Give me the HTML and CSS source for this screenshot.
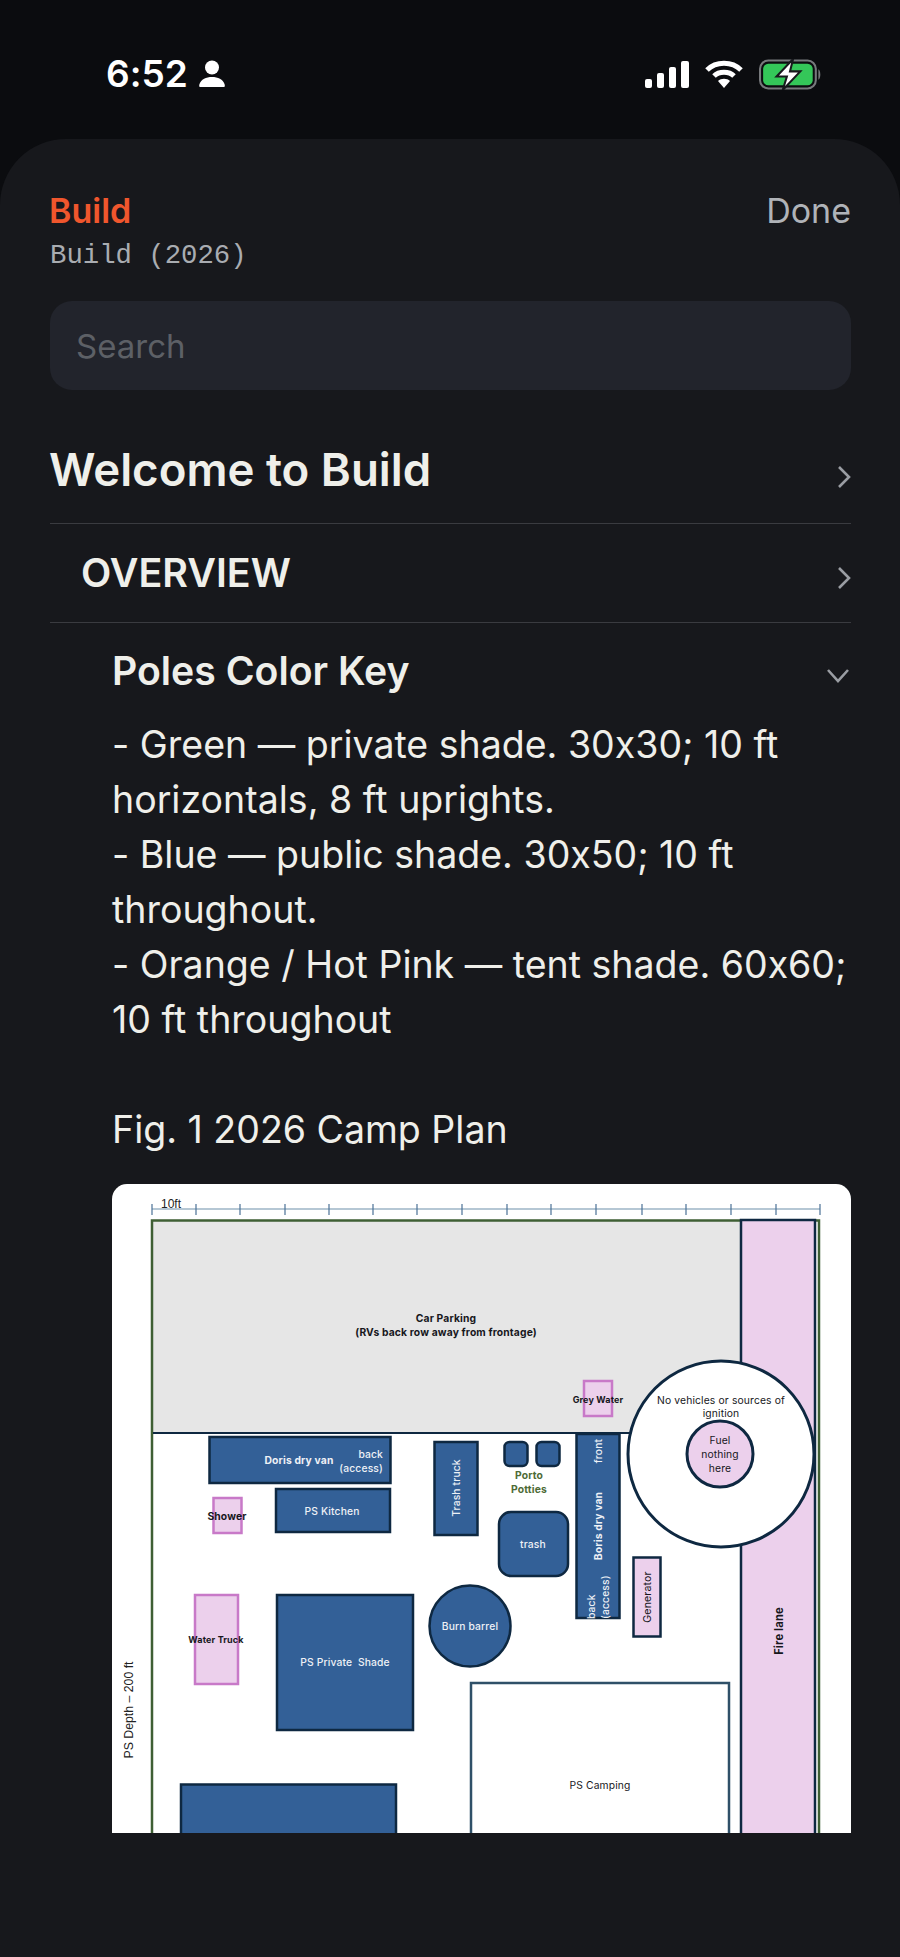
FILE: index.html
```html
<!DOCTYPE html>
<html lang="en">
<head>
    <meta charset="UTF-8">
    <meta name="viewport" content="width=device-width, initial-scale=1.0">
    <title>Build</title>
    <link rel="stylesheet" href="styles.css">
</head>
<body>
    <div class="status-bar">
        <div class="status-left">
            <span class="status-time">6:52</span>
            <svg class="icon-person" viewBox="0 0 26 28" fill="#fff">
                <circle cx="13" cy="7.5" r="7"></circle>
                <path d="M1 27C0 27 0 25.5 0.5 24C2 19.5 7 17 13 17C19 17 24 19.5 25.5 24C26 25.5 26 27 25 27Z"></path>
            </svg>
        </div>
        <div class="status-right">
            <svg class="icon-signal" viewBox="0 0 44 27" fill="#fff">
                <rect x="0" y="18" width="7" height="9" rx="2"></rect>
                <rect x="12" y="12" width="7" height="15" rx="2"></rect>
                <rect x="24" y="6" width="7" height="21" rx="2"></rect>
                <rect x="36" y="0" width="8" height="27" rx="2"></rect>
            </svg>
            <svg class="icon-wifi" viewBox="0 0 38 28" fill="none" stroke="#fff" stroke-width="5">
                <path d="M2 10C11 1 27 1 36 10"></path>
                <path d="M9 16C14 11 24 11 29 16"></path>
                <path d="M19 28L13 21C16 18 22 18 25 21Z" fill="#fff" stroke="none"></path>
            </svg>
            <svg class="icon-battery" viewBox="0 0 61 30">
                <rect x="1" y="1.5" width="54" height="27" rx="8" fill="none" stroke="#77797c" stroke-width="2"></rect>
                <rect x="4" y="4.5" width="48" height="21" rx="5" fill="#34c759"></rect>
                <path d="M57.5 10C60 11 60 19 57.5 20Z" fill="#77797c"></path>
                <path d="M33 0L17 17H27L23 30L40 12H30Z" fill="#fff" stroke="#17181c" stroke-width="2"></path>
            </svg>
        </div>
    </div>

    <div class="sheet">
        <div class="sheet-header">
            <div>
                <div class="sheet-title">Build</div>
                <div class="sheet-subtitle">Build (2026)</div>
            </div>
            <div class="done-link">Done</div>
        </div>

        <div class="search-box">Search</div>

        <div class="row row-welcome">
            <h2 class="row-title title-welcome">Welcome to Build</h2>
            <svg class="chevron" viewBox="0 0 14 22" fill="none" stroke="currentColor" stroke-width="2.6">
                <path d="M2 1L12 11L2 21"></path>
            </svg>
        </div>
        <div class="row row-overview">
            <h3 class="row-title title-overview">OVERVIEW</h3>
            <svg class="chevron" viewBox="0 0 14 22" fill="none" stroke="currentColor" stroke-width="2.6">
                <path d="M2 1L12 11L2 21"></path>
            </svg>
        </div>
        <div class="row row-poles">
            <h4 class="row-title title-poles">Poles Color Key</h4>
            <svg class="chevron-down" viewBox="0 0 22 14" fill="none" stroke="currentColor" stroke-width="2.6">
                <path d="M1 1L11 12L21 1"></path>
            </svg>
        </div>

        <div class="article">
            <p class="article-text">- Green — private shade. 30x30; 10 ft horizontals, 8 ft uprights.<br>- Blue — public shade. 30x50; 10 ft throughout.<br>- Orange / Hot Pink — tent shade. 60x60; 10 ft throughout</p>
            <p class="article-text fig-caption">Fig. 1 2026 Camp Plan</p>

            <div class="plan">
                <!-- viewBox uses screen coordinates so the drawing is easy to measure -->
                <svg class="plan-svg" viewBox="112 1183 739 649">
                    <path class="ruler" d="M152 1208H820"></path>
                    <path class="ruler-tick" d="M152 1203V1214M196 1203V1214M240 1203V1214M285 1203V1214M329 1203V1214M373 1203V1214M417 1203V1214M462 1203V1214M507 1203V1214M551 1203V1214M596 1203V1214M642 1203V1214M686 1203V1214M731 1203V1214M776 1203V1214M820 1203V1214"></path>
                    <text class="lbl-ruler" x="161" y="1207">10ft</text>

                    <rect class="parking" x="153" y="1220" width="588" height="212"></rect>
                    <path class="plot-line" d="M152 1832V1219.5H819V1832"></path>
                    <path class="dark-line" d="M153 1432H640"></path>
                    <rect class="fire-lane" x="741" y="1219" width="74" height="620"></rect>

                    <text class="lbl lbl-bold lbl-dark" x="446" y="1321">Car Parking</text>
                    <text class="lbl lbl-bold lbl-dark" x="446" y="1335">(RVs back row away from frontage)</text>

                    <rect class="pink-box" x="584" y="1380" width="28" height="35"></rect>
                    <text class="lbl lbl-bold lbl-dark lbl-small" x="598" y="1402">Grey Water</text>

                    <circle class="no-fire" cx="721" cy="1453" r="93"></circle>
                    <circle class="fuel" cx="720" cy="1453" r="33"></circle>
                    <text class="lbl lbl-dark" x="721" y="1403">No vehicles or sources of</text>
                    <text class="lbl lbl-dark" x="721" y="1416">ignition</text>
                    <text class="lbl lbl-dark" x="720" y="1443">Fuel</text>
                    <text class="lbl lbl-dark" x="720" y="1457">nothing</text>
                    <text class="lbl lbl-dark" x="720" y="1471">here</text>

                    <rect class="blue-box" x="209.5" y="1436" width="181" height="46"></rect>
                    <text class="lbl lbl-bold lbl-white" x="299" y="1463">Doris dry van</text>
                    <text class="lbl lbl-white lbl-end" x="383" y="1457">back</text>
                    <text class="lbl lbl-white lbl-end" x="383" y="1471">(access)</text>

                    <rect class="blue-box" x="276" y="1488" width="114" height="43"></rect>
                    <text class="lbl lbl-white" x="332" y="1514">PS Kitchen</text>

                    <rect class="pink-box" x="213.5" y="1497" width="28" height="35"></rect>
                    <text class="lbl lbl-bold lbl-dark" x="227" y="1519">Shower</text>

                    <rect class="blue-box" x="434.5" y="1441" width="43" height="93"></rect>
                    <text class="lbl lbl-white" transform="translate(460 1487) rotate(-90)">Trash truck</text>

                    <rect class="blue-box" x="504.5" y="1441" width="23" height="24" rx="5"></rect>
                    <rect class="blue-box" x="536.5" y="1441" width="23" height="24" rx="5"></rect>
                    <text class="lbl lbl-bold lbl-green" x="529" y="1478">Porto</text>
                    <text class="lbl lbl-bold lbl-green" x="529" y="1492">Potties</text>

                    <rect class="blue-box" x="499" y="1511" width="69" height="64" rx="12"></rect>
                    <text class="lbl lbl-white" x="533" y="1547">trash</text>

                    <rect class="blue-box" x="576.5" y="1433" width="43" height="184"></rect>
                    <text class="lbl lbl-white" transform="translate(602 1450) rotate(-90)">front</text>
                    <text class="lbl lbl-bold lbl-white" transform="translate(602 1525) rotate(-90)">Boris dry van</text>
                    <text class="lbl lbl-white lbl-start" transform="translate(595 1618) rotate(-90)">back</text>
                    <text class="lbl lbl-white lbl-start" transform="translate(609 1618) rotate(-90)">(access)</text>

                    <rect class="pink-dark" x="633.5" y="1556.5" width="27" height="79"></rect>
                    <text class="lbl lbl-dark lbl-generator" transform="translate(651 1596) rotate(-90)">Generator</text>

                    <rect class="pink-box" x="195" y="1594" width="43" height="89"></rect>
                    <text class="lbl lbl-bold lbl-dark lbl-small" x="216" y="1642">Water Truck</text>

                    <rect class="blue-box" x="277" y="1594" width="136" height="135"></rect>
                    <text class="lbl lbl-white" x="345" y="1665">PS Private  Shade</text>

                    <circle class="blue-box" cx="470" cy="1625" r="40.5"></circle>
                    <text class="lbl lbl-white" x="470" y="1629">Burn barrel</text>

                    <rect class="camping" x="471" y="1682" width="258" height="170"></rect>
                    <text class="lbl lbl-dark" x="600" y="1788">PS Camping</text>

                    <rect class="blue-box" x="181" y="1783.5" width="215" height="70"></rect>

                    <text class="lbl-depth" transform="translate(133 1709) rotate(-90)">PS Depth – 200 ft</text>
                    <text class="lbl lbl-bold lbl-dark lbl-fire" transform="translate(783 1630) rotate(-90)">Fire lane</text>
                </svg>
            </div>
        </div>
    </div>
</body>
</html>
```

FILE: styles.css
```css
* {
    box-sizing: border-box;
}

html, body {
    margin: 0;
    padding: 0;
}

body {
    width: 900px;
    height: 1957px;
    overflow: hidden;
    background: #0b0c0f;
    font-family: "Inter", "Liberation Sans", sans-serif;
    font-feature-settings: "calt" 0;
}

.status-bar {
    height: 139px;
    padding: 54px 78px 0 106px;
    display: flex;
    justify-content: space-between;
    align-items: flex-start;
}

.status-left {
    display: flex;
    align-items: center;
    gap: 11px;
    height: 40px;
}

.status-time {
    font-size: 37px;
    font-weight: 600;
    color: #fff;
    line-height: 40px;
}

.icon-person {
    width: 26px;
    height: 28px;
}

.status-right {
    display: flex;
    align-items: center;
    height: 40px;
}

.icon-signal {
    width: 44px;
    height: 27px;
    margin-right: 16px;
}

.icon-wifi {
    width: 38px;
    height: 28px;
    margin-right: 16px;
}

.icon-battery {
    width: 63px;
    height: 31px;
}

.sheet {
    height: 1818px;
    background: #17181c;
    border-radius: 66px 66px 0 0;
    padding: 0 49px 0 50px;
}

.sheet-header {
    display: flex;
    justify-content: space-between;
    padding-top: 52px;
}

.sheet-title {
    font-size: 34px;
    font-weight: 600;
    line-height: 40px;
    margin-left: -1px;
    color: #f0562d;
}

.sheet-subtitle {
    font-family: "Liberation Mono", monospace;
    font-size: 27.3px;
    line-height: 32px;
    margin-top: 9px;
    color: #a9acb1;
}

.done-link {
    font-size: 34px;
    line-height: 40px;
    color: #b0b3b8;
}

.search-box {
    height: 89px;
    margin-top: 29px;
    padding: 0 26px;
    display: flex;
    align-items: center;
    background: #22242c;
    border-radius: 22px;
    font-size: 33px;
    color: #5d6066;
}

.row {
    display: flex;
    justify-content: space-between;
    align-items: center;
    border-bottom: 1px solid #3a3b40;
    color: #9a9da3;
}

.row-welcome {
    height: 134px;
    padding-top: 25px;
}

.row-overview {
    height: 99px;
    padding-left: 31px;
}

.row-poles {
    height: 94px;
    padding-left: 63px;
    border-bottom: none;
}

.row-title {
    margin: 0;
    color: #efefea;
    font-weight: 600;
}

.title-welcome {
    font-size: 45.6px;
    margin-left: -1px;
}

.title-overview {
    font-size: 39.4px;
}

.title-poles {
    font-size: 39.2px;
    margin-left: -1px;
}

.chevron {
    width: 14px;
    height: 22px;
    margin-top: 16px;
}

.row-overview .chevron {
    margin-top: 10px;
}

.chevron-down {
    width: 22px;
    height: 14px;
    margin-top: 12px;
    margin-right: 2px;
}

.article {
    padding-left: 62px;
}

.article-text {
    margin: 0;
    font-size: 37.5px;
    line-height: 55px;
    color: #efefea;
}

.fig-caption {
    margin-top: 55px;
}

.plan {
    width: 739px;
    height: 649px;
    margin-top: 27px;
    background: #fff;
    border-radius: 15px 15px 0 0;
    overflow: hidden;
}

.plan-svg {
    display: block;
    width: 739px;
    height: 649px;
}

.ruler {
    fill: none;
    stroke: #9db4c6;
    stroke-width: 1.5;
}

.ruler-tick {
    fill: none;
    stroke: #4a7196;
    stroke-width: 1.2;
}

.parking {
    fill: #e6e6e6;
}

.plot-line {
    fill: none;
    stroke: #3f5f34;
    stroke-width: 2.5;
}

.dark-line {
    stroke: #0e2841;
    stroke-width: 2;
}

.fire-lane {
    fill: #ecd0ec;
    stroke: #0e2841;
    stroke-width: 2.5;
}

.pink-box {
    fill: #ecd0ec;
    stroke: #c879c8;
    stroke-width: 2.5;
}

.pink-dark {
    fill: #ecd0ec;
    stroke: #0e2841;
    stroke-width: 2.5;
}

.blue-box {
    fill: #336097;
    stroke: #0e2841;
    stroke-width: 2.5;
}

.no-fire {
    fill: #fff;
    stroke: #0e2841;
    stroke-width: 3;
}

.fuel {
    fill: #ecd0ec;
    stroke: #0e2841;
    stroke-width: 3;
}

.camping {
    fill: #fff;
    stroke: #2f5068;
    stroke-width: 2.5;
}

.lbl {
    font-family: "Inter", sans-serif;
    font-size: 10.3px;
    letter-spacing: 0.15px;
    text-anchor: middle;
    white-space: pre;
}

.lbl-bold {
    font-weight: 700;
}

.lbl-dark {
    fill: #17171c;
}

.lbl-white {
    fill: #eef1f6;
    font-weight: 500;
}

.lbl-white.lbl-bold {
    font-weight: 700;
}

.lbl-green {
    fill: #4e6b36;
}

.lbl-end {
    text-anchor: end;
}

.lbl-start {
    text-anchor: start;
}

.lbl-small {
    font-size: 9px;
}

.lbl-generator {
    font-size: 10.6px;
}

.lbl-fire {
    font-size: 11.2px;
}

.lbl-ruler {
    font-family: "Liberation Sans", sans-serif;
    font-size: 12px;
    fill: #222;
}

.lbl-depth {
    font-family: "Liberation Sans", sans-serif;
    font-size: 12.3px;
    text-anchor: middle;
    fill: #222;
}
```
